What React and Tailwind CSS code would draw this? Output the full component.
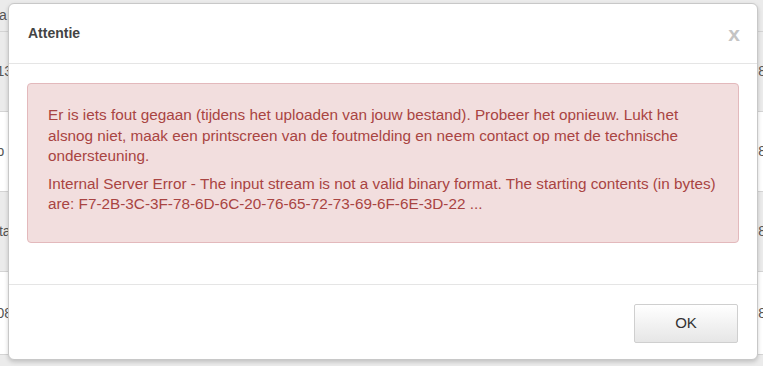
import React from 'react';

const rows = [
    { left: 'Naa', right: '', bg: 'bg-[#ebebeb]', h: 'h-[32px]' },
    { left: '2013', right: '8', bg: 'bg-[#ebebeb]', h: 'h-[80px]' },
    { left: 'Slip', right: '8', bg: 'bg-white', h: 'h-[80px]' },
    { left: 'Data', right: '8', bg: 'bg-[#ebebeb]', h: 'h-[80px]' },
    { left: '2008', right: '8', bg: 'bg-white', h: 'h-[83px]' },
    { left: '', right: '', bg: 'bg-[#ebebeb]', h: 'h-[40px]' },
];

function BackgroundTable() {
    return (
        <div className="flex flex-col w-full">
            {rows.map((row, i) => (
                <div key={i} className={`${row.bg} ${row.h} flex items-center justify-between border-b border-[#d4d4d4] text-[14px] text-[#555]`}>
                    <span className="ml-[-19px]">{row.left}</span>
                    <span className="mr-[-3px]">{row.right}</span>
                </div>
            ))}
        </div>
    );
}

export default function App() {
    return (
        <div className="relative w-[763px] h-[366px] overflow-hidden bg-[#ebebeb] font-['Liberation_Sans',Arial,sans-serif]">
            <BackgroundTable />

            {/* modal */}
            <div className="absolute left-[8px] top-[3px] w-[750px] h-[357px] flex flex-col bg-white border border-[#c8c8c8] rounded-[6px] shadow-[0_2px_4px_rgba(0,0,0,0.18)]">
                <div className="h-[60px] flex items-center justify-between pl-[19px] pr-[17px] border-b border-[#e5e5e5]">
                    <h4 className="text-[14px] font-bold text-[#444]">Attentie</h4>
                    <span className="text-[21px] font-bold text-[#c4c4c4] leading-none">x</span>
                </div>

                <div className="h-[220px] px-[18px] pt-[19px]">
                    <div className="h-[160px] bg-[#f2dede] border border-[#e3b9bc] rounded-[4px] pl-[20px] pr-[14px] pt-[21px] text-[15.3px] leading-[20.5px] text-[#a94442]">
                        <p className="mb-[7px]">
                            Er is iets fout gegaan (tijdens het uploaden van jouw bestand). Probeer het opnieuw. Lukt het alsnog niet, maak een printscreen van de foutmelding en neem contact op met de technische ondersteuning.
                        </p>
                        <p>
                            Internal Server Error - The input stream is not a valid binary format. The starting contents (in bytes) are: F7-2B-3C-3F-78-6D-6C-20-76-65-72-73-69-6F-6E-3D-22 ...
                        </p>
                    </div>
                </div>

                <div className="flex-1 flex items-start justify-end border-t border-[#e5e5e5] pr-[19px] pt-[19px]">
                    <button className="w-[104px] h-[39px] border border-[#cfcfcf] rounded-[2px] bg-gradient-to-b from-white to-[#e6e6e6] text-[15px] text-[#333]">
                        OK
                    </button>
                </div>
            </div>
        </div>
    );
}
